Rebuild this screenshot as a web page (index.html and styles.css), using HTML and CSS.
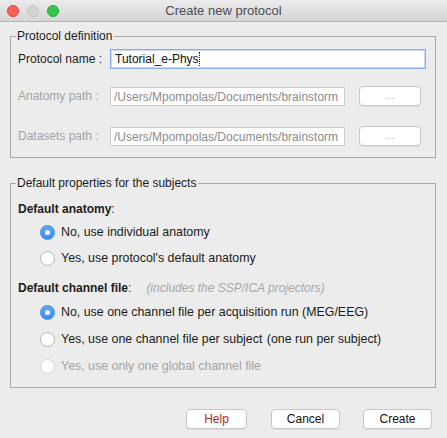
FILE: index.html
```html
<!DOCTYPE html>
<html>
<head>
<meta charset="utf-8">
<title>Create new protocol</title>
<link rel="stylesheet" href="styles.css">
</head>
<body>
<div class="window">
  <header class="titlebar">
    <div class="lights">
      <span class="light close"></span>
      <span class="light mini"></span>
      <span class="light zoom"></span>
    </div>
    <div class="title">Create new protocol</div>
    <div></div>
  </header>

  <main class="content">
    <fieldset class="group group-def">
      <legend>Protocol definition</legend>
      <div class="row row-name">
        <label class="lbl">Protocol name :</label>
        <div class="field field-active">Tutorial_e-Phys<span class="caret"></span></div>
      </div>
      <div class="row row-anat">
        <label class="lbl disabled">Anatomy path :</label>
        <div class="field field-disabled">/Users/Mpompolas/Documents/brainstorm</div>
        <button class="btn btn-browse" disabled>...</button>
      </div>
      <div class="row row-data">
        <label class="lbl disabled">Datasets path :</label>
        <div class="field field-disabled">/Users/Mpompolas/Documents/brainstorm</div>
        <button class="btn btn-browse" disabled>...</button>
      </div>
    </fieldset>

    <fieldset class="group group-subj">
      <legend>Default properties for the subjects</legend>
      <div class="heading heading-anat"><b>Default anatomy</b>:</div>
      <div class="radio-list">
        <div class="radio-row"><span class="radio checked"></span><span>No, use individual anatomy</span></div>
        <div class="radio-row"><span class="radio"></span><span>Yes, use protocol's default anatomy</span></div>
      </div>
      <div class="heading heading-chan"><b>Default channel file</b>:<span class="note">(includes the SSP/ICA projectors)</span></div>
      <div class="radio-list radio-list-chan">
        <div class="radio-row"><span class="radio checked"></span><span>No, use one channel file per acquisition run (MEG/EEG)</span></div>
        <div class="radio-row"><span class="radio"></span><span>Yes, use one channel file per subject <span class="aside">(one run per subject)</span></span></div>
        <div class="radio-row disabled"><span class="radio"></span><span>Yes, use only one global channel file</span></div>
      </div>
    </fieldset>

    <div class="actions">
      <button class="btn btn-help">Help</button>
      <button class="btn btn-cancel">Cancel</button>
      <button class="btn btn-create">Create</button>
    </div>
  </main>
</div>
</body>
</html>
```

FILE: styles.css
```css
* { box-sizing: border-box; }

html, body {
  margin: 0;
  padding: 0;
}

body {
  background: #ececec;
  font-family: "Liberation Sans", Arial, sans-serif;
  font-size: 12px;
  color: #1c1c1c;
  width: 447px;
  height: 438px;
  overflow: hidden;
}

.window {
  display: flex;
  flex-direction: column;
  height: 438px;
}

/* ---- title bar ---- */
.titlebar {
  height: 22px;
  flex: none;
  display: grid;
  grid-template-columns: 1fr auto 1fr;
  align-items: center;
  background: linear-gradient(#ebebeb, #d6d6d6);
  border-bottom: 1px solid #b4b4b4;
}

.lights {
  display: flex;
  gap: 8px;
  padding-left: 7px;
}

.light {
  width: 12px;
  height: 12px;
  border-radius: 50%;
  display: block;
}

.light.close { background: #fc5f57; border: 1px solid #e0443e; }
.light.mini  { background: #d3d3d3; border: 1px solid #c2c2c2; }
.light.zoom  { background: #33c748; border: 1px solid #27aa35; }

.title {
  font-size: 13px;
  color: #4d4d4d;
  line-height: 16px;
}

/* ---- body ---- */
.content {
  padding: 0 11px 0 10px;
  display: flex;
  flex-direction: column;
}

.group {
  margin: 7px 0 0 0;
  border: 1px solid #a9a9a9;
  padding: 6px 9px 11px 7px;
  min-width: 0;
}

.group legend {
  font-size: 12px;
  line-height: 14px;
  padding: 0 2px 0 1px;
  margin-left: -2px;
  color: #1c1c1c;
}

.group-subj {
  margin-top: 18px;
  padding-top: 11px;
}

.row {
  display: flex;
  align-items: center;
  height: 20px;
}

.row-anat { margin-top: 17px; }
.row-data { margin-top: 20px; }

.lbl {
  width: 92px;
  flex: none;
  color: #1c1c1c;
}

.lbl.disabled { color: #a3a3a3; }

.field {
  background: #fff;
  height: 20px;
  line-height: 18px;
  padding: 0 3px;
  white-space: nowrap;
  overflow: hidden;
}

.field-active {
  flex: 1;
  border: 1px solid #86b1e6;
  box-shadow: inset 0 0 0 1px #c4daf5;
  color: #111;
  padding-left: 4px;
}

.caret {
  display: inline-block;
  width: 0;
  height: 14px;
  vertical-align: -3px;
  border-left: 1px dotted #222;
}

.field-disabled {
  width: 235px;
  height: 19px;
  margin-top: 1px;
  border: 1px solid #cbcbcb;
  color: #8c8c8c;
}

.btn {
  font-family: "Liberation Sans", Arial, sans-serif;
  font-size: 12px;
  height: 20px;
  padding: 0;
  background: #fff;
  border: 1px solid #c6c6c6;
  border-radius: 4px;
  box-shadow: 0 1px 0 rgba(0, 0, 0, 0.06);
  color: #111;
  line-height: 18px;
}

.btn-browse {
  width: 62px;
  margin-left: 14px;
  color: #9a9a9a;
  font-size: 9px;
  letter-spacing: 0.5px;
}

/* ---- subject defaults ---- */
.heading {
  line-height: 16px;
  height: 16px;
  white-space: nowrap;
}

.heading b { font-weight: bold; }

.heading-chan { margin-top: 12px; }

.note {
  margin-left: 15px;
  font-style: italic;
  color: #a8a8a8;
}

.radio-list {
  display: flex;
  flex-direction: column;
  gap: 6px;
  margin-top: 5px;
  padding-left: 22px;
}

.radio-list-chan {
  gap: 7px;
  margin-top: 6px;
}

.radio-row {
  display: flex;
  align-items: center;
  height: 20px;
  gap: 6px;
  font-size: 12.4px;
  white-space: nowrap;
}

.radio-row .aside { margin-left: 1px; }

.radio-row.disabled { color: #a3a3a3; }

.radio {
  width: 15px;
  height: 15px;
  border-radius: 50%;
  flex: none;
  background: #fff;
  border: 1px solid #b5b5b5;
  display: flex;
  align-items: center;
  justify-content: center;
}

.radio-row.disabled .radio { border-color: #d2d2d2; }

.radio.checked {
  background: linear-gradient(#5aa8fb, #3a8ef2);
  border-color: #3f8ff0;
}

.radio.checked::after {
  content: "";
  width: 5px;
  height: 5px;
  border-radius: 50%;
  background: #fff;
}

/* ---- buttons ---- */
.actions {
  display: flex;
  justify-content: flex-end;
  margin-top: 21px;
  padding-right: 4px;
  gap: 23px;
}

.btn-help { width: 61px; color: #b3261e; margin-right: 1px; }
.btn-cancel { width: 69px; }
.btn-create { width: 69px; }
```
